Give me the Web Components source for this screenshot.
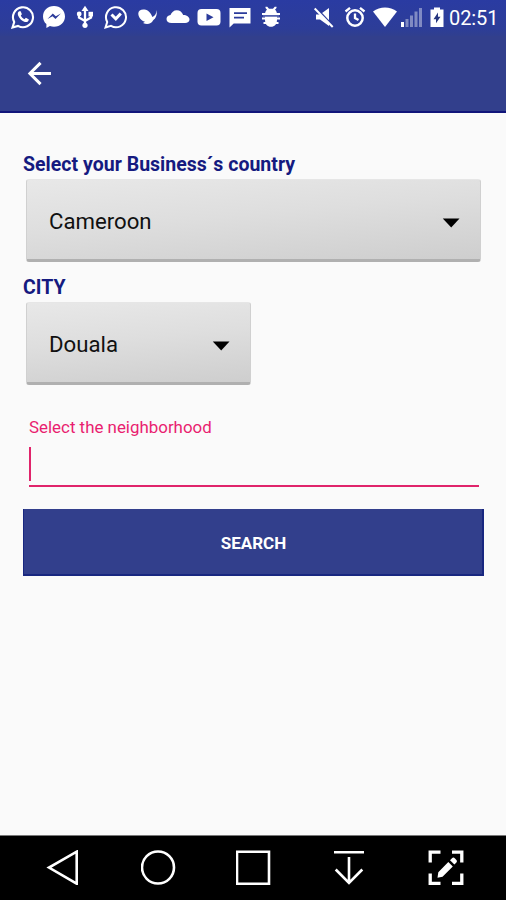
<!DOCTYPE html>
<html lang="en">
<head>
<meta charset="utf-8">
<title>Business search</title>
<style>
body{margin:0;background:#fafafa;font-family:Roboto,"Liberation Sans",sans-serif}
</style>
</head>
<body>
<business-search-app></business-search-app>
<script>
const ICONS = {
  whatsapp:'<path d="M1.5 22.5 3.2 17A10 10 0 1 1 7 20.9Z" fill="none" stroke="#fff" stroke-width="2.1"/><path d="M8.2 6.2c-1.5.8-1.8 2.5-1 4.5 1.3 3 3.7 5.3 6.7 6.2 2 .5 3.6-.3 4-2.4l-3-1.7-1.5 1.4c-1.6-.7-2.8-1.9-3.6-3.6l1.1-1.4-1.2-3z"/>',
  messenger:'<path d="M12 1C5.6 1 1 5.500 1 11.400c0 3.200 1.300 5.800 3.400 7.700V23l3.500-1.900c1.300.4 2.700.6 4.100.6 6.400 0 11-4.500 11-10.300S18.400 1 12 1z"/><path d="m5.500 14 5.300-5.600 3 2.800 5-2.800-5.300 5.600-3-2.800z" fill="#2b3b9b"/>',
  usb:'<path d="M12 3v18M6 8v4.500l6 3.500 6-3.500V8" fill="none" stroke="#fff" stroke-width="2.300"/><path d="m12 .8 3.500 5.200h-7z"/><circle cx="12" cy="20.300" r="2.600"/><circle cx="6.200" cy="9" r="2.400"/><path d="M15.500 6.800H20v4.700h-4.500z"/>',
  check:'<path d="M1.500 22.500 3.200 17A10 10 0 1 1 7 20.900Z" fill="none" stroke="#fff" stroke-width="2"/><path d="m7.500 9.500 4.300 4.300 5-5.300" fill="none" stroke="#fff" stroke-width="3"/>',
  bird:'<path d="M3.300 8.500C3.300 5.500 6.300 4 9.500 4.500c3.700.6 6.500 3.500 7.800 7.500 2.700-1 4.200-3.300 4.200-7 .9 5-.6 8.300-3.500 10.500-1.500 3.300-5.800 4.300-10 2.500l2-1.200C5.800 15.500 3.300 12 3.300 8.500z"/>',
  cloud:'<path d="M5.500 18C2.500 18 .5 16.400.5 14c0-2 1.700-3.700 4-3.900C5.400 7.300 7.800 5.200 10.800 5.200c3 0 5.500 2 6.400 4.900 3.400 0 6.300 1.900 6.300 4.400 0 2.100-1.800 3.500-4.400 3.500z"/>',
  video:'<rect x=".5" y="4" width="23" height="16.500" rx="4"/><path d="m9.500 8.500 7 3.700-7 3.800z" fill="#2b3b9b"/>',
  message:'<path d="M1.500 3h21v15.500H5.700L1.500 22.500z"/><path d="M6 8.200h13M6 12.700h10" stroke="#2b3b9b" stroke-width="1.700"/>',
  debug:'<path d="M6 9.500c0-2.300.7-3.800 2-4.800L6.500 3V1.800h1.800L10 3.700h4l1.700-1.900h1.800V3L16 4.700c1.300 1 2 2.500 2 4.800zM6 11.500h12v3c0 4.800-2.400 7.300-6 7.300s-6-2.500-6-7.300z"/><path d="M3 9h18M3 13.500h18M4.500 18h15" stroke="#fff" stroke-width="1.800"/><path d="M4 11h16" stroke="#6d78ba" stroke-width="1.200"/>',
  mute:'<path d="M4 9.500h4L17 3v18l-9-6.500H4z"/><path d="m3.800 3 18 19" stroke="#2b3b9b" stroke-width="2.500"/><path d="m2.700 3.500 18 18.500" stroke="#fff" stroke-width="2"/>',
  alarm:'<circle cx="12" cy="13" r="7.700" fill="none" stroke="#fff" stroke-width="2.500"/><path d="M12 8.500V13l3.500 2M2.500 6.500 7 2.800M21.500 6.500 17 2.800" fill="none" stroke="#fff" stroke-width="2.300"/>',
  wifi:'<path d="M0 6.500c7.200-5.400 16.800-5.400 24 0L12 22z"/>',
  signal:'<path d="M1 17h3v5H1z"/><path d="M5.500 14h3v8h-3zM10 10.500h3V22h-3zM14.500 6.500h3V22h-3zM19 3h3v19h-3z" opacity=".4"/>',
  battery:'<path d="M5.500 4.500H9v-2h6v2h3.500V22h-13z"/><path d="m13 7.500-4.500 6.700H11v4l4.500-6.500H13z" fill="#26367f"/>',
  back:'<path d="M23 12H3M13 1.800 2.800 12 13 22.200" fill="none" stroke="#fff" stroke-width="2.900"/>',
  caret:'<path d="M3.800 9.500h16.700L12.200 18.500z" fill="#000"/>',
};
const NAV = {
  back:'<path d="M31.700 1.700v32L4 17.500z"/>',
  home:'<circle cx="17" cy="17.500" r="16"/>',
  recent:'<path d="M1 1.700h32v32H1z"/>',
  down:'<path d="M2 2.200h30M17 7v26M3.700 19.500 17 33l13.300-13.500"/>',
  capture:'<path d="M12.500 2.200H2.200V12.500M24 2.200h9.800v10.300M12.500 33.300H2.200V23.500M24 33.300h9.800V23.500" stroke-width="3.300"/><path d="m10.300 22.200 10-10.200 4.500 4.500-10.300 10.200-5 1zM22 10.200l2-2c1-1 2-.7 3 .3l1.200 1.200c1 1 .9 2 0 3l-1.800 1.900z" fill="#fff" stroke="none"/>',
};
function define(name, render){
  customElements.define(name, class extends HTMLElement{
    connectedCallback(){
      if(!this.shadowRoot) this.attachShadow({mode:'open'}).innerHTML = render(this);
    }
  });
}
define('ui-icon', el => `<style>:host{display:flex;justify-content:center;align-items:center;flex:none}svg{display:block;fill:#fff}</style>
<svg width="${el.getAttribute('size')||24}" height="${el.getAttribute('size')||24}" viewBox="0 0 24 24">${ICONS[el.getAttribute('name')]}</svg>`);
define('status-bar', () => `<style>
:host{display:flex;height:36px;padding:5px 0 0 7px;box-sizing:border-box;background:linear-gradient(#2a3ba2,#2d3d98 80%,#303f8e);color:#fff}
.g{display:flex;height:24px}.g ui-icon{width:31px}.r{margin-left:22px}
.r .w{width:30px}.r .s{width:24px}.r .b{width:25px}
time{font-size:20px;line-height:27px;letter-spacing:-.1px;height:24px;white-space:nowrap}
</style><div class="g">${['whatsapp','messenger','usb','check','bird','cloud','video','message','debug'].map(n=>`<ui-icon name="${n}"></ui-icon>`).join('')}</div>
<div class="g r"><ui-icon name="mute"></ui-icon><ui-icon name="alarm"></ui-icon><ui-icon class="w" name="wifi"></ui-icon><ui-icon class="s" name="signal"></ui-icon><ui-icon class="b" name="battery"></ui-icon><time>02:51</time></div>`);
define('app-bar', () => `<style>:host{display:flex;align-items:center;height:77px;box-sizing:border-box;padding-left:27px;background:#323f8c;border-bottom:2px solid #11157a}</style><ui-icon name="back" size="25"></ui-icon>`);
define('field-label', () => `<style>:host{display:block;color:#151a80;font-weight:700;font-size:19.500px;line-height:26px;white-space:nowrap;letter-spacing:.02px}</style><slot></slot>`);
define('drop-down', () => `<style>:host{display:flex;align-items:center;justify-content:space-between;box-sizing:border-box;height:83px;margin:1px 0 0 3px;padding:3px 17px 0 22px;border:1px solid #d0d0d0;border-top-color:#e6e6e6;border-bottom:3px solid #b0b0b0;border-radius:3px;background:linear-gradient(175deg,#e8e8e8,#dedede 45%,#cecece);font-size:22.200px;color:#111}</style><span><slot></slot></span><ui-icon name="caret"></ui-icon>`);
define('text-field', () => `<style>:host{display:block;margin:31px 5px 0 6px;color:#e91e70}label{display:block;font-size:16.900px;line-height:22px}
.in{height:40px;border-bottom:2px solid #e0246b;margin-top:9px;box-sizing:border-box}.c{width:2px;height:34px;background:#e0246b}</style><label><slot></slot></label><div class="in"><div class="c"></div></div>`);
define('action-button', () => `<style>:host{display:flex;align-items:center;justify-content:center;height:67px;box-sizing:border-box;margin-top:22px;background:#323f8c;border:solid #182780;border-width:0 2px 2px 1px;padding:2px 0 0 1px;color:#fff;font-weight:700;font-size:17px}</style><slot></slot>`);
define('nav-bar', () => `<style>:host{display:flex;align-items:center;height:65px;background:#000;border-top:1px solid #777;box-sizing:border-box;padding-left:15px}
div{width:95.700px;display:flex;justify-content:center}svg{display:block;fill:none;stroke:#fff;stroke-width:2.600;margin-bottom:1px}</style>${Object.values(NAV).map(p=>`<div><svg width="36" height="35" viewBox="0 0 36 35">${p}</svg></div>`).join('')}`);
define('business-search-app', () => `<style>
:host{display:flex;flex-direction:column;width:506px;height:900px;background:#fafafa}
main{flex:1;padding:39px 22px 0 23px}
.country{margin-right:3px}.city{width:225px}.l2{margin-top:13px}
</style><status-bar></status-bar><app-bar></app-bar>
<main><field-label>Select your Business´s country</field-label><drop-down class="country">Cameroon</drop-down>
<field-label class="l2">CITY</field-label><drop-down class="city">Douala</drop-down>
<text-field>Select the neighborhood</text-field><action-button>SEARCH</action-button></main><nav-bar></nav-bar>`);
</script>
</body>
</html>
